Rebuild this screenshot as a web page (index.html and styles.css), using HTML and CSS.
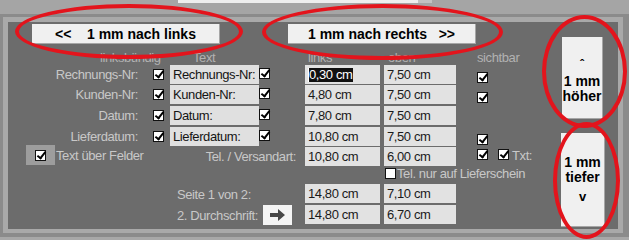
FILE: index.html
```html
<!DOCTYPE html>
<html lang="de">
<head>
  <meta charset="UTF-8">
  <title>Druckpositionen</title>
  <link rel="stylesheet" href="styles.css">
</head>
<body>
<div class="screen">
  <div class="topstrip"><div class="prevbox"></div><div class="prevtab"></div></div>

  <div class="panel">
    <div class="main">
      <div class="toolbar">
        <button class="btn btn-wide">&lt;&lt;&nbsp;&nbsp;&nbsp; 1 mm nach links</button>
        <button class="btn btn-wide">1 mm nach rechts&nbsp;&nbsp; &gt;&gt;</button>
      </div>

      <div class="grid">
        <!-- Kopfzeile -->
        <div class="hd hd-bundig">linksbündig</div>
        <div class="hd hd-text">Text</div>
        <div></div>
        <div class="hd hd-links">links</div>
        <div class="hd hd-oben">oben</div>
        <div class="hd">sichtbar</div>

        <!-- Rechnungs-Nr -->
        <div class="lbl">Rechnungs-Nr:</div>
        <div class="c-left"><span class="cb on"></span></div>
        <div class="tbox">Rechnungs-Nr:</div>
        <div class="c-text"><span class="cb on"></span></div>
        <div class="inp"><span class="sel">0,30 cm</span></div>
        <div class="inp inp-oben">7,50 cm</div>
        <div class="c-vis"><span class="cb on"></span></div>

        <!-- Kunden-Nr -->
        <div class="lbl">Kunden-Nr:</div>
        <div class="c-left"><span class="cb on"></span></div>
        <div class="tbox">Kunden-Nr:</div>
        <div class="c-text"><span class="cb on"></span></div>
        <div class="inp">4,80 cm</div>
        <div class="inp inp-oben">7,50 cm</div>
        <div class="c-vis"><span class="cb on"></span></div>

        <!-- Datum -->
        <div class="lbl">Datum:</div>
        <div class="c-left"><span class="cb on"></span></div>
        <div class="tbox">Datum:</div>
        <div class="c-text"><span class="cb on"></span></div>
        <div class="inp">7,80 cm</div>
        <div class="inp inp-oben">7,50 cm</div>
        <div></div>

        <!-- Lieferdatum -->
        <div class="lbl">Lieferdatum:</div>
        <div class="c-left"><span class="cb on"></span></div>
        <div class="tbox">Lieferdatum:</div>
        <div class="c-text"><span class="cb on"></span></div>
        <div class="inp">10,80 cm</div>
        <div class="inp inp-oben">7,50 cm</div>
        <div class="c-vis"><span class="cb on"></span></div>

        <!-- Tel. / Versandart -->
        <div class="above">
          <span class="focusbox"><span class="cb on"></span></span>
          <span>Text über Felder</span>
        </div>
        <div class="lbl lbl-tel">Tel. / Versandart:</div>
        <div class="inp">10,80 cm</div>
        <div class="inp inp-oben">6,00 cm</div>
        <div class="c-vis c-txt"><span class="cb on"></span><span class="cb on"></span><span>Txt:</span></div>

        <div class="skip5"></div>
        <div class="only-delivery"><span class="cb"></span><span>Tel. nur auf Lieferschein</span></div>

        <!-- Seite -->
        <div class="skip2"></div>
        <div class="page-lbl">Seite 1 von 2:</div>
        <div class="inp">14,80 cm</div>
        <div class="inp inp-oben">7,10 cm</div>
        <div></div>

        <!-- Durchschrift -->
        <div class="skip2"></div>
        <div class="page-lbl">
          <span>2. Durchschrift:</span>
          <button class="arrow-btn">
            <svg width="15" height="12" viewBox="0 0 15 12"><path d="M0 4h8V0l7 6-7 6V8H0z" fill="#484848"/></svg>
          </button>
        </div>
        <div class="inp">14,80 cm</div>
        <div class="inp inp-oben">6,70 cm</div>
        <div></div>
      </div>
    </div>

    <div class="side">
      <button class="btn btn-up"><span class="caret">ˆ</span>1 mm<br>höher</button>
      <button class="btn btn-down">1 mm<br>tiefer<br><span class="vee">v</span></button>
    </div>
  </div>
  <div class="bottomstrip"></div>

  <!-- rote Markierungen -->
  <div class="mark m1"></div>
  <div class="mark m2"></div>
  <div class="mark m3"></div>
  <div class="mark m4"></div>
</div>
</body>
</html>
```

FILE: styles.css
```css
* {
  box-sizing: border-box;
}
body {
  margin: 0;
  background: #8b8b8b;
  font-family: "Liberation Sans", Arial, sans-serif;
  font-size: 13px;
  letter-spacing: -0.4px;
}
.screen {
  position: relative;
  width: 629px;
  height: 240px;
  overflow: hidden;
}
.topstrip {
  height: 14px;
  background: #a5a5a5;
  display: flex;
  padding-left: 178px;
}
.prevbox { width: 240px; height: 3px; background: #eeeeee; }
.prevtab { width: 14px; height: 3px; background: #c2c2c2; }

.panel {
  margin: 3px 0 0 3px;
  width: 620px;
  height: 216px;
  border: 5px solid #a9a9a9;
  border-bottom-width: 4px;
  background: #6c6c6c;
  display: flex;
}
.bottomstrip {
  margin-top: 4px;
  height: 3px;
  background: #a8a8a8;
}

.main { width: 548px; }
.toolbar {
  display: flex;
  gap: 68px;
  padding: 2px 0 0 24px;
}
.btn {
  font: bold 14px "Liberation Sans", Arial, sans-serif;
  letter-spacing: 0;
  color: #000;
  background: #f0f0f0;
  border: none;
  border-right: 1px solid #a6a6a6;
  border-bottom: 1px solid #a6a6a6;
  padding: 0;
  cursor: pointer;
}
.btn-wide { width: 188px; height: 20px; }

.grid {
  display: grid;
  margin-top: 8px;
  grid-template-columns: 135px 27px 89px 46px 75px 97px 79px;
  grid-template-rows: 13px 20px 21px 21px 20px 20px 17px 21px 20px;
  color: #c8c8c8;
  white-space: nowrap;
}
.hd {
  color: #b2b2b2;
  line-height: 12px;
}
.hd-bundig { grid-column: span 2; padding-left: 92px; }
.hd-text { padding-left: 23px; }
.hd-links { padding-left: 3px; }
.hd-oben { padding-left: 8px; }

.lbl {
  text-align: right;
  padding-right: 5px;
  line-height: 19px;
}
.lbl-tel { grid-column: span 3; padding-right: 9px; }

.cb {
  display: inline-block;
  position: relative;
  flex: none;
  width: 11px;
  height: 11px;
  background: #fff;
  border: 1px solid #111;
}
.cb.on::after {
  content: "";
  position: absolute;
  left: 3px;
  top: -1px;
  width: 3px;
  height: 7px;
  border: solid #000;
  border-width: 0 2.5px 2.5px 0;
  transform: rotate(38deg);
}
.c-left { padding: 3px 0 0 10px; }
.c-text { padding-top: 2px; }
.c-vis { padding-top: 6px; }

.tbox {
  height: 19px;
  line-height: 19px;
  padding-left: 3px;
  background: #e0e0e0;
  color: #151515;
}
.inp {
  width: 75px;
  height: 19px;
  line-height: 19px;
  padding-left: 3px;
  background: #e2e2e2;
  color: #1a1a1a;
}
.inp-oben { width: 72px; margin-left: 4px; }
.sel {
  display: inline-block;
  line-height: 14px;
  background: #111;
  color: #fff;
  border-left: 1px solid #fff;
  padding-right: 1px;
}

.above {
  display: flex;
  align-items: center;
  gap: 1px;
  margin: -2px 0 0 18px;
  height: 20px;
}
.above span:last-child { flex: none; }
.focusbox {
  display: flex;
  flex: none;
  align-items: center;
  justify-content: center;
  width: 29px;
  height: 20px;
  background: #9d9d9d;
}
.c-txt {
  display: flex;
  align-items: flex-start;
  padding-top: 2px;
  gap: 10px;
}
.c-txt span:last-child { margin: -1px 0 0 -7px; }

.skip5 { grid-column: span 5; }
.skip2 { grid-column: span 2; }
.only-delivery {
  grid-column: span 2;
  display: flex;
  align-items: flex-start;
  padding: 1px 0 0 5px;
  line-height: 12px;
}
.only-delivery .cb { margin-right: 1px; }

.page-lbl {
  grid-column: span 2;
  display: flex;
  align-items: center;
  gap: 5px;
  padding-left: 7px;
  height: 20px;
}
.arrow-btn {
  width: 29px;
  height: 20px;
  padding: 0;
  border: none;
  background: #f4f4f4;
  display: flex;
  align-items: center;
  justify-content: center;
}

.side {
  display: flex;
  flex-direction: column;
  align-items: flex-start;
  gap: 14px;
  padding: 15px 0 0 6px;
}
.btn-up { width: 41px; height: 82px; line-height: 15px; padding-top: 4px; }
.btn-down { width: 44px; height: 94px; line-height: 15px; margin-left: -1px; }
.caret { display: block; font-size: 12px; line-height: 18px; }
.vee { display: inline-block; margin-top: 4px; font-size: 13px; }

.mark {
  position: absolute;
  border: 4px solid #e3141c;
  border-radius: 50%;
}
.m1 { left: 15px; top: 4px; width: 228px; height: 55px; }
.m2 { left: 262px; top: 4px; width: 241px; height: 56px; }
.m3 { left: 542px; top: 15px; width: 85px; height: 113px; }
.m4 { left: 553px; top: 122px; width: 67px; height: 117px; }
```
